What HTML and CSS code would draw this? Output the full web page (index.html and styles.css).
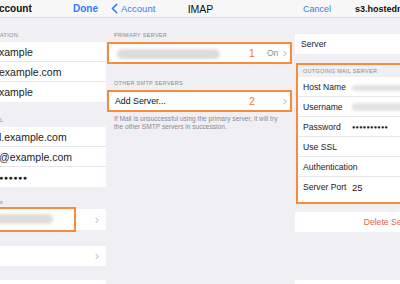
FILE: index.html
```html
<!DOCTYPE html>
<html lang="en">
<head>
    <meta charset="UTF-8">
    <meta name="viewport" content="width=device-width, initial-scale=1.0">
    <title>Mail Server Settings</title>
    <link rel="stylesheet" href="styles.css">
</head>
<body>
    <div class="panel left">
        <div class="nav">
            <span class="nav-title">ccount</span>
            <span class="nav-done">Done</span>
        </div>
        <div class="header h1">ATION</div>
        <div class="group">
            <div class="row">xample</div>
            <div class="row">example.com</div>
            <div class="row">xample</div>
        </div>
        <div class="header h2">L</div>
        <div class="group">
            <div class="row">l.example.com</div>
            <div class="row">@example.com</div>
            <div class="row dots">&#9679;&#9679;&#9679;&#9679;&#9679;&#9679;</div>
        </div>
        <div class="header h3">s</div>
        <div class="group">
            <div class="row tall">
                <span class="blur blur-smtp"></span>
                <span class="chev">&#8250;</span>
                <span class="mark mark-smtp"></span>
            </div>
        </div>
        <div class="group spaced">
            <div class="row"><span class="chev">&#8250;</span></div>
        </div>
        <div class="group spaced-b">
            <div class="row"></div>
        </div>
    </div>

    <div class="panel middle">
        <div class="nav">
            <span class="back">
                <svg width="7" height="11" viewBox="0 0 7 11"><path d="M6 1L1.5 5.5L6 10" fill="none" stroke="#2f7cf6" stroke-width="1.6"/></svg>
                Account
            </span>
            <span class="nav-center">IMAP</span>
        </div>
        <div class="header">PRIMARY SERVER</div>
        <div class="boxed">
            <span class="blur blur-primary"></span>
            <span class="num">1</span>
            <span class="detail">On</span>
            <span class="chev">&#8250;</span>
        </div>
        <div class="header">OTHER SMTP SERVERS</div>
        <div class="boxed">
            <span class="cell-text">Add Server...</span>
            <span class="num">2</span>
            <span class="chev">&#8250;</span>
        </div>
        <div class="footer">If Mail is unsuccessful using the primary server, it will try<br>the other SMTP servers in succession.</div>
    </div>

    <div class="panel right">
        <div class="nav">
            <span class="cancel">Cancel</span>
            <span class="nav-host">s3.hostedmail.com</span>
        </div>
        <div class="group server">
            <div class="row">Server</div>
        </div>
        <div class="outgoing">
            <div class="header">OUTGOING MAIL SERVER</div>
            <div class="row"><span class="label">Host Name</span><span class="blur blur-host"></span></div>
            <div class="row"><span class="label">Username</span><span class="blur blur-user"></span></div>
            <div class="row"><span class="label">Password</span><span class="value pw">&#9679;&#9679;&#9679;&#9679;&#9679;&#9679;&#9679;&#9679;&#9679;&#9679;</span></div>
            <div class="row"><span class="label">Use SSL</span></div>
            <div class="row"><span class="label">Authentication</span></div>
            <div class="row last"><span class="label">Server Port</span><span class="value">25</span></div>
        </div>
        <div class="group delete">
            <div class="row">Delete Server</div>
        </div>
        <div class="group bottom">
            <div class="row"></div>
        </div>
    </div>
</body>
</html>
```

FILE: styles.css
```css
body, html {
    margin: 0;
    padding: 0;
    height: 100%;
    overflow: hidden;
    font-family: "Liberation Sans", Arial, sans-serif;
    background-color: #efeff4;
    color: #111;
}
body {
    display: flex;
}
.panel {
    display: flex;
    flex-direction: column;
    flex-shrink: 0;
    overflow: hidden;
    height: 284px;
}
.panel > * {
    flex-shrink: 0;
}
.left { width: 106px; }
.middle { width: 189px; }
.right { width: 105px; }

.nav {
    height: 17px;
    border-bottom: 1px solid #dcdce0;
    background-color: #f7f7f8;
    display: flex;
    align-items: center;
    font-size: 10px;
    position: relative;
}
.nav-title {
    font-weight: bold;
    margin-left: -1px;
}
.nav-done {
    font-weight: bold;
    color: #2f7cf6;
    margin-left: auto;
    margin-right: 8px;
}
.back {
    color: #2f7cf6;
    font-size: 9.5px;
    display: flex;
    align-items: center;
    gap: 3px;
    margin-left: 5px;
}
.nav-center {
    position: absolute;
    left: 0;
    right: 0;
    text-align: center;
    font-size: 10.5px;
    pointer-events: none;
}
.cancel {
    color: #2f7cf6;
    font-size: 9px;
    margin-left: 8px;
}
.nav-host {
    font-weight: bold;
    font-size: 9px;
    margin-left: 24px;
    white-space: nowrap;
}

.header {
    font-size: 5.5px;
    color: #8a8a8f;
    letter-spacing: 0.3px;
    display: flex;
    align-items: flex-end;
    padding: 0 0 4px 8px;
    box-sizing: border-box;
    white-space: nowrap;
}
.left .header { padding-left: 0; }
.h1 { height: 24px; }
.h2 { height: 25px; }
.h3 { height: 22px; }

.group {
    background-color: #fff;
}
.row {
    height: 20px;
    display: flex;
    align-items: center;
    font-size: 10.5px;
    color: #222;
    border-bottom: 1px solid #e6e6ea;
    box-sizing: border-box;
    position: relative;
    white-space: nowrap;
}
.group .row:last-child { border-bottom: none; }
.left .row { margin-left: -1px; }
.dots {
    font-size: 7px;
    letter-spacing: 0.5px;
}
.tall { height: 21px; }
.spaced { margin-top: 16px; }
.spaced-b { margin-top: 14px; }
.chev {
    position: absolute;
    right: 7px;
    top: 50%;
    transform: translateY(-55%);
    color: #c4c4c9;
    font-size: 13px;
}
.mark {
    position: absolute;
    border: 2px solid #f58b3b;
    box-sizing: border-box;
}
.mark-smtp {
    left: -2px;
    width: 79px;
    top: -2px;
    bottom: -2px;
}
.blur {
    position: absolute;
    background-color: #dcdcdc;
    border-radius: 8px;
    filter: blur(1.5px);
}
.blur-smtp {
    left: -4px;
    width: 58px;
    top: 5px;
    height: 10px;
}

.boxed {
    height: 22px;
    margin: 0 3px 0 1px;
    border: 2px solid #f58b3b;
    background-color: #fff;
    box-sizing: border-box;
    display: flex;
    align-items: center;
    position: relative;
}
.middle .header {
    height: 24px;
}
.boxed + .header { height: 26px; }
.blur-primary {
    left: 8px;
    width: 103px;
    top: 5px;
    height: 10px;
}
.cell-text {
    font-size: 8.8px;
    margin-left: 6px;
}
.num {
    position: absolute;
    left: 140px;
    color: #f07a2a;
    font-size: 10.5px;
}
.detail {
    position: absolute;
    left: 158px;
    color: #8e8e93;
    font-size: 8.5px;
}
.boxed .chev { right: 3px; }
.footer {
    font-size: 6.6px;
    color: #8a8a8f;
    line-height: 7.5px;
    padding: 3px 0 0 8px;
    white-space: nowrap;
}

.server { margin-top: 16px; }
.server .row {
    font-size: 8.6px;
    padding-left: 6px;
}
.outgoing {
    margin-top: 9px;
    margin-left: 1px;
    border: 2px solid #f58b3b;
    border-right: none;
    background-color: #fff;
}
.outgoing .header {
    height: 12px;
    background-color: #efeff4;
    padding: 0 0 1px 5px;
    align-items: center;
}
.outgoing .row {
    font-size: 8.6px;
    padding-left: 5px;
    margin-left: 0;
}
.outgoing .row.last {
    border-bottom: none;
    height: 25px;
    padding-bottom: 5px;
}
.label {
    width: 47px;
    flex-shrink: 0;
}
.value {
    margin-left: 2px;
    font-size: 9.5px;
}
.pw {
    font-size: 5.5px;
    letter-spacing: 0.3px;
}
.blur-host {
    left: 54px;
    width: 70px;
    top: 8px;
    height: 6px;
    background-color: #e2e2e2;
}
.blur-user {
    left: 54px;
    width: 70px;
    top: 6px;
    height: 8px;
    background-color: #e2e2e2;
}
.delete { margin-top: 8px; }
.delete .row {
    width: 190px;
    justify-content: center;
    color: #e8604f;
    font-size: 8.6px;
}
.bottom { margin-top: 48px; }
```
